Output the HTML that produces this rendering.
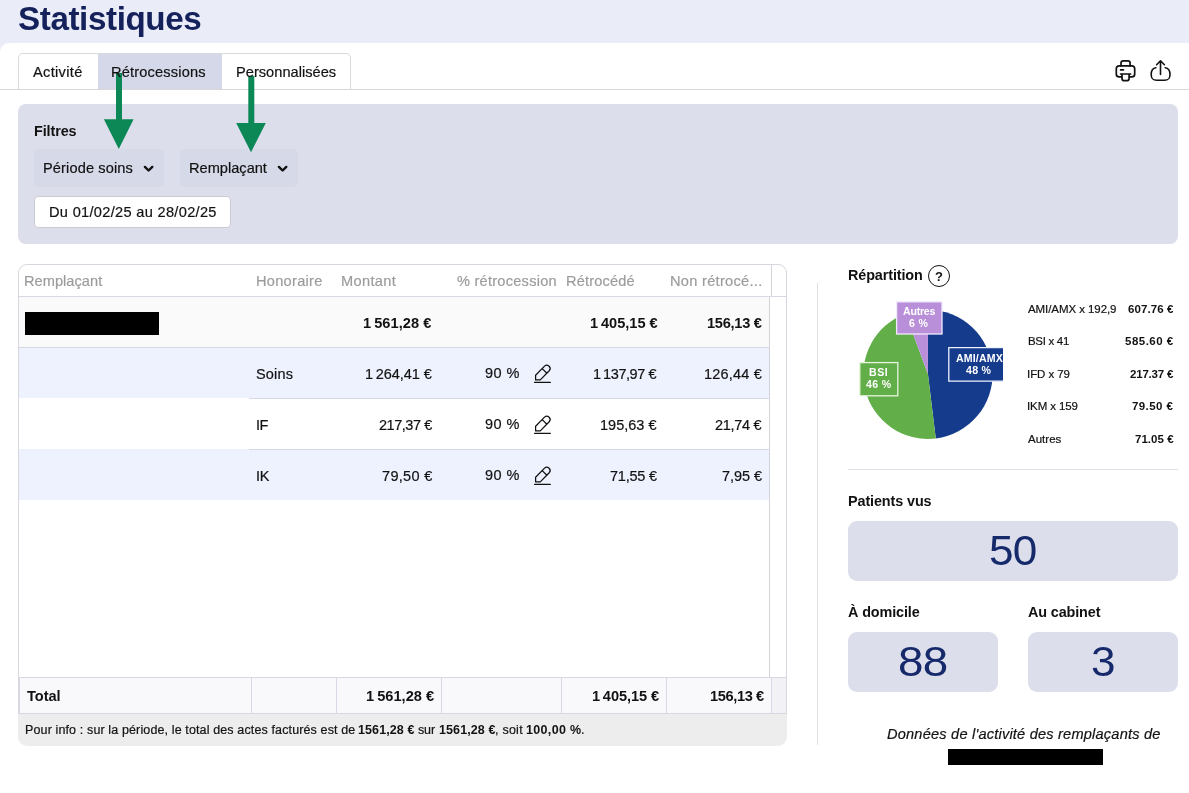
<!DOCTYPE html>
<html lang="fr"><head><meta charset="utf-8"><title>Statistiques</title>
<style>
*{box-sizing:border-box;margin:0;padding:0}
html,body{width:1189px;height:793px;overflow:hidden;background:#fff;font-family:"Liberation Sans",sans-serif;color:#121212}
.a{position:absolute}
.t{position:absolute;white-space:nowrap;line-height:1;color:#121212;will-change:transform}
.s{-webkit-text-stroke:0.2px currentColor}
.hl{position:absolute;height:1px;background:#d6d8e4}
.vl{position:absolute;width:1px;background:#d6d8e4}
svg{position:absolute;overflow:visible}
</style></head><body>
<!-- header -->
<div class="a" style="left:0;top:0;width:1189px;height:60px;background:#eaecf8"></div>
<div class="a" style="left:0;top:43px;width:1189px;height:750px;background:#fff;border-top-left-radius:9px"></div>
<!-- tabs -->
<div class="a" style="left:18px;top:53px;width:333px;height:37px;border:1px solid #d9dade;border-bottom:none;border-radius:5px 5px 0 0;background:#fff"></div>
<div class="a" style="left:98px;top:54px;width:124px;height:35px;background:#d5d8e8"></div>
<div class="hl" style="left:0;top:89px;width:1189px;background:#d8d8dc"></div>
<!-- filters -->
<div class="a" style="left:18px;top:104px;width:1160px;height:140px;background:#dcdeeb;border-radius:8px"></div>
<div class="a" style="left:34px;top:149px;width:130px;height:38px;background:#d6d9e8;border-radius:5px"></div>
<div class="a" style="left:180px;top:149px;width:118px;height:38px;background:#d6d9e8;border-radius:5px"></div>
<div class="a" style="left:34px;top:196px;width:197px;height:32px;background:#fff;border:1px solid #cacbd2;border-radius:4px"></div>
<svg style="left:0;top:0" width="1189" height="793" viewBox="0 0 1189 793">
 <g fill="none" stroke="#111" stroke-width="2.4" stroke-linecap="round" stroke-linejoin="round">
  <path d="M144.9 166.9 L148.6 170.5 L152.3 166.9"/>
  <path d="M278.9 166.9 L282.6 170.5 L286.3 166.9"/>
 </g>
 <g fill="#0c8856">
  <path d="M116 73 H122 V119.3 H133.6 L118.8 149 L103.9 119.3 H116 Z"/>
  <path d="M248.3 75.8 H254.3 V123 H265.8 L251 152.2 L236.2 123 H248.3 Z"/>
 </g>
 <!-- printer -->
 <g fill="none" stroke="#111" stroke-width="1.7" stroke-linecap="round" stroke-linejoin="round">
  <path d="M1121 65.8 V63.2 Q1121 60.9 1123.3 60.9 H1127.8 Q1130.1 60.9 1130.1 63.2 V65.8"/>
  <path d="M1121.6 76.9 H1119.3 Q1116.3 76.9 1116.3 73.9 V68.8 Q1116.3 65.8 1119.3 65.8 H1131.7 Q1134.7 65.8 1134.7 68.8 V73.9 Q1134.7 76.9 1131.7 76.9 H1129.6"/>
  <path d="M1120.6 74 H1130.6 M1122 74 V78.4 Q1122 80.7 1124.3 80.7 H1126.8 Q1129.1 80.7 1129.1 78.4 V74"/>
  <path d="M1120.6 69.9 H1123.4"/>
 </g>
 <!-- share -->
 <g fill="none" stroke="#111" stroke-width="1.6" stroke-linecap="round" stroke-linejoin="round">
  <path d="M1160.5 74.4 V61 M1156.6 64.7 L1160.5 60.8 L1164.4 64.7"/>
  <path d="M1155.9 67.7 C1152.3 68.2 1151.2 70.6 1151.2 74.5 C1151.2 78.8 1152.6 80.2 1156.8 80.2 H1164.4 C1168.6 80.2 1170 78.8 1170 74.5 C1170 70.6 1168.9 68.2 1165.2 67.7"/>
 </g>
</svg>
<!-- table -->
<div class="a" style="left:18px;top:714px;width:769px;height:32px;background:#ededed;border-radius:0 0 9px 9px"></div>
<div class="a" style="left:18px;top:264px;width:769px;height:450px;border:1px solid #d7d8df;border-radius:9px 9px 0 0;background:#fff;overflow:hidden">
 <div class="a" style="left:0;top:32px;width:751px;height:51px;background:#fafafa"></div>
 <div class="a" style="left:0;top:83px;width:751px;height:50px;background:#eef2fe"></div>
 <div class="a" style="left:0;top:184px;width:751px;height:51px;background:#eef2fe"></div>
 <div class="a" style="left:0;top:413px;width:767px;height:36px;background:#f9f9fb"></div>
 <div class="a" style="left:753px;top:413px;width:14px;height:36px;background:#f2f2f6"></div>
</div>
<div class="hl" style="left:19px;top:296px;width:767px"></div>
<div class="vl" style="left:771px;top:265px;height:31px;background:#d3d4da"></div>
<div class="vl" style="left:769px;top:297px;height:380px;background:#d3d4da"></div>
<div class="hl" style="left:19px;top:347px;width:751px"></div>
<div class="hl" style="left:249px;top:398px;width:521px"></div>
<div class="hl" style="left:249px;top:449px;width:521px"></div>
<div class="a" style="left:25px;top:312px;width:134px;height:23px;background:#000"></div>
<div class="hl" style="left:19px;top:677px;width:767px"></div>
<div class="hl" style="left:19px;top:713px;width:767px"></div>
<div class="vl" style="left:19px;top:677px;height:36px"></div>
<div class="vl" style="left:251px;top:678px;height:35px"></div>
<div class="vl" style="left:336px;top:678px;height:35px"></div>
<div class="vl" style="left:441px;top:678px;height:35px"></div>
<div class="vl" style="left:561px;top:678px;height:35px"></div>
<div class="vl" style="left:666px;top:678px;height:35px"></div>
<div class="vl" style="left:771px;top:678px;height:35px"></div>
<svg style="left:0;top:0" width="1189" height="793" viewBox="0 0 1189 793">
 <g fill="none" stroke="#111" stroke-width="1.25" stroke-linecap="round" stroke-linejoin="round">
  <path transform="translate(533 364)" d="M2.6 15.9 V11.2 L11.54 2.1 A3.3 3.3 0 0 1 16.2 6.76 L7.3 15.9 Z M9.2 4.6 L13.9 9.3 M1.6 18.4 H17.3"/>
  <path transform="translate(533 415)" d="M2.6 15.9 V11.2 L11.54 2.1 A3.3 3.3 0 0 1 16.2 6.76 L7.3 15.9 Z M9.2 4.6 L13.9 9.3 M1.6 18.4 H17.3"/>
  <path transform="translate(533 466)" d="M2.6 15.9 V11.2 L11.54 2.1 A3.3 3.3 0 0 1 16.2 6.76 L7.3 15.9 Z M9.2 4.6 L13.9 9.3 M1.6 18.4 H17.3"/>
 </g>
</svg>
<!-- right panel -->
<div class="vl" style="left:817px;top:283px;height:462px;background:#dfe0e5"></div>
<div class="a" style="left:927.5px;top:265px;width:22px;height:22px;border:1.9px solid #111;border-radius:50%"></div>
<svg style="left:0;top:0" width="1189" height="793" viewBox="0 0 1189 793">
 <path d="M927.95 374.3 L927.95 309.70 A64.6 64.6 0 0 1 935.78 438.42 Z" fill="#153b8c"/>
<path d="M927.95 374.3 L935.78 438.42 A64.6 64.6 0 0 1 905.61 313.68 Z" fill="#62ae48"/>
<path d="M927.95 374.3 L905.61 313.68 A64.6 64.6 0 0 1 927.95 309.70 Z" fill="#b88fd8"/>
<rect x="896.6" y="301.8" width="45.4" height="32.2" fill="#b88fd8" stroke="#f3eaff" stroke-width="1.3"/>
<rect x="859.8" y="362.6" width="38" height="33.2" fill="#62ae48" stroke="#e6f6df" stroke-width="1.3"/>
<path d="M1003 347.7 H948.8 V381.2 H1003" fill="#153b8c" stroke="#eef2ff" stroke-width="1.3"/>

</svg>
<div class="hl" style="left:848px;top:469px;width:330px;background:#dfe0e8"></div>
<div class="a" style="left:848px;top:521px;width:330px;height:60px;background:#dcdeeb;border-radius:9px"></div>
<div class="a" style="left:848px;top:632px;width:150px;height:60px;background:#dcdeeb;border-radius:9px"></div>
<div class="a" style="left:1028px;top:632px;width:150px;height:60px;background:#dcdeeb;border-radius:9px"></div>
<div class="a" style="left:947.6px;top:749px;width:155px;height:16.4px;background:#000"></div>
<div class="t" style="left:18.05px;top:2px;font-size:33.2px;font-weight:bold;letter-spacing:-0.399px;color:#14215a;">Statistiques</div>
<div class="t s" style="left:33.37px;top:65px;font-size:14.6px;letter-spacing:0.320px;">Activité</div>
<div class="t s" style="left:111.48px;top:65px;font-size:14.6px;letter-spacing:0.169px;">Rétrocessions</div>
<div class="t s" style="left:236.16px;top:65px;font-size:14.6px;letter-spacing:0.028px;">Personnalisées</div>
<div class="t" style="left:33.60px;top:124px;font-size:14.4px;font-weight:bold;letter-spacing:-0.107px;">Filtres</div>
<div class="t s" style="left:43.43px;top:161px;font-size:14.6px;letter-spacing:0.122px;">Période soins</div>
<div class="t s" style="left:189.20px;top:161px;font-size:14.6px;letter-spacing:0.006px;">Remplaçant</div>
<div class="t s" style="left:48.51px;top:205px;font-size:14.6px;letter-spacing:0.310px;">Du 01/02/25 au 28/02/25</div>
<div class="t s" style="left:23.87px;top:274px;font-size:14.6px;letter-spacing:0.040px;color:#9c9c9c;">Remplaçant</div>
<div class="t s" style="left:255.51px;top:274px;font-size:14.6px;letter-spacing:0.277px;color:#9c9c9c;">Honoraire</div>
<div class="t s" style="left:340.93px;top:274px;font-size:14.6px;letter-spacing:0.344px;color:#9c9c9c;">Montant</div>
<div class="t s" style="left:457.11px;top:274px;font-size:14.6px;letter-spacing:0.239px;color:#9c9c9c;">% rétrocession</div>
<div class="t s" style="left:565.51px;top:274px;font-size:14.6px;letter-spacing:0.165px;color:#9c9c9c;">Rétrocédé</div>
<div class="t s" style="left:670.48px;top:274px;font-size:14.6px;letter-spacing:0.295px;color:#9c9c9c;">Non rétrocé...</div>
<div class="t" style="left:363.40px;top:316px;font-size:14.6px;font-weight:bold;letter-spacing:0.068px;">1 561,28 €</div>
<div class="t" style="left:589.71px;top:316px;font-size:14.6px;font-weight:bold;letter-spacing:-0.022px;">1 405,15 €</div>
<div class="t" style="left:707.10px;top:316px;font-size:14.6px;font-weight:bold;letter-spacing:-0.264px;">156,13 €</div>
<div class="t s" style="left:255.85px;top:367px;font-size:14.5px;letter-spacing:0.178px;">Soins</div>
<div class="t s" style="left:365.00px;top:367px;font-size:14.5px;letter-spacing:-0.067px;">1 264,41 €</div>
<div class="t s" style="left:485.24px;top:366px;font-size:14.5px;letter-spacing:0.436px;">90 %</div>
<div class="t s" style="left:593.33px;top:367px;font-size:14.5px;letter-spacing:-0.429px;">1 137,97 €</div>
<div class="t s" style="left:704.00px;top:367px;font-size:14.5px;letter-spacing:0.182px;">126,44 €</div>
<div class="t s" style="left:255.69px;top:418px;font-size:14.5px;letter-spacing:-0.625px;">IF</div>
<div class="t s" style="left:378.61px;top:418px;font-size:14.5px;letter-spacing:-0.464px;">217,37 €</div>
<div class="t s" style="left:485.24px;top:417px;font-size:14.5px;letter-spacing:0.436px;">90 %</div>
<div class="t s" style="left:600.33px;top:418px;font-size:14.5px;letter-spacing:0.015px;">195,63 €</div>
<div class="t s" style="left:715.16px;top:418px;font-size:14.5px;letter-spacing:-0.304px;">21,74 €</div>
<div class="t s" style="left:255.69px;top:469px;font-size:14.5px;letter-spacing:-0.311px;">IK</div>
<div class="t s" style="left:381.55px;top:469px;font-size:14.5px;letter-spacing:0.313px;">79,50 €</div>
<div class="t s" style="left:485.24px;top:468px;font-size:14.5px;letter-spacing:0.436px;">90 %</div>
<div class="t s" style="left:609.82px;top:469px;font-size:14.5px;letter-spacing:-0.220px;">71,55 €</div>
<div class="t s" style="left:721.61px;top:469px;font-size:14.5px;letter-spacing:-0.043px;">7,95 €</div>
<div class="t" style="left:27.38px;top:689px;font-size:14.6px;font-weight:bold;letter-spacing:-0.050px;">Total</div>
<div class="t" style="left:365.71px;top:689px;font-size:14.6px;font-weight:bold;letter-spacing:0.044px;">1 561,28 €</div>
<div class="t" style="left:591.89px;top:689px;font-size:14.6px;font-weight:bold;letter-spacing:-0.087px;">1 405,15 €</div>
<div class="t" style="left:709.53px;top:689px;font-size:14.6px;font-weight:bold;letter-spacing:-0.368px;">156,13 €</div>
<div class="t s" style="left:24.81px;top:724px;font-size:12.5px;letter-spacing:0.129px;">Pour info : sur la période, le total des actes facturés est de</div>
<div class="t" style="left:358.48px;top:724px;font-size:12.5px;font-weight:bold;letter-spacing:0.093px;">1561,28 €</div>
<div class="t s" style="left:418.22px;top:724px;font-size:12.5px;letter-spacing:-0.141px;">sur</div>
<div class="t" style="left:439.10px;top:724px;font-size:12.5px;font-weight:bold;letter-spacing:0.090px;">1561,28 €</div>
<div class="t s" style="left:494.71px;top:724px;font-size:12.5px;letter-spacing:0.241px;">, soit</div>
<div class="t" style="left:525.96px;top:724px;font-size:12.5px;font-weight:bold;letter-spacing:0.330px;">100,00 %</div>
<div class="t s" style="left:581.18px;top:724px;font-size:12.5px;">.</div>
<div class="t" style="left:847.96px;top:268px;font-size:14.4px;font-weight:bold;letter-spacing:-0.112px;">Répartition</div>
<div class="t" style="left:934.57px;top:270px;font-size:13px;font-weight:bold;">?</div>
<div class="t s" style="left:1028.22px;top:304px;font-size:11.5px;letter-spacing:-0.071px;">AMI/AMX x 192,9</div>
<div class="t" style="left:1127.53px;top:304px;font-size:11.5px;font-weight:bold;letter-spacing:0.108px;">607.76 €</div>
<div class="t s" style="left:1027.58px;top:336px;font-size:11.5px;letter-spacing:-0.313px;">BSI x 41</div>
<div class="t" style="left:1124.87px;top:336px;font-size:11.5px;font-weight:bold;letter-spacing:0.487px;">585.60 €</div>
<div class="t s" style="left:1027.43px;top:369px;font-size:11.5px;letter-spacing:-0.070px;">IFD x 79</div>
<div class="t" style="left:1129.62px;top:369px;font-size:11.5px;font-weight:bold;letter-spacing:-0.190px;">217.37 €</div>
<div class="t s" style="left:1027.43px;top:401px;font-size:11.5px;letter-spacing:-0.100px;">IKM x 159</div>
<div class="t" style="left:1132.26px;top:401px;font-size:11.5px;font-weight:bold;letter-spacing:0.403px;">79.50 €</div>
<div class="t s" style="left:1028.22px;top:434px;font-size:11.5px;letter-spacing:0.016px;">Autres</div>
<div class="t" style="left:1134.50px;top:434px;font-size:11.5px;font-weight:bold;letter-spacing:0.030px;">71.05 €</div>
<div class="t" style="left:847.82px;top:494px;font-size:14.4px;font-weight:bold;letter-spacing:-0.109px;">Patients vus</div>
<div class="t" style="left:847.95px;top:605px;font-size:14.4px;font-weight:bold;letter-spacing:-0.118px;">À domicile</div>
<div class="t" style="left:1028.11px;top:605px;font-size:14.4px;font-weight:bold;letter-spacing:-0.127px;">Au cabinet</div>
<div class="t" style="left:989.12px;top:530px;font-size:42px;letter-spacing:-0.658px;transform-origin:0 50%;transform:scaleX(1.05);color:#16296b;">50</div>
<div class="t" style="left:898.10px;top:641px;font-size:42px;letter-spacing:-0.640px;transform-origin:0 50%;transform:scaleX(1.09);color:#16296b;">88</div>
<div class="t" style="left:1091.10px;top:641px;font-size:42px;transform-origin:0 50%;transform:scaleX(1.05);color:#16296b;">3</div>
<div class="t s" style="left:887.34px;top:727px;font-size:14.6px;font-style:italic;letter-spacing:0.199px;">Données de l'activité des remplaçants de</div>
<div class="t" style="left:902.95px;top:306px;font-size:10.6px;font-weight:bold;letter-spacing:-0.225px;color:#ffffff;">Autres</div>
<div class="t" style="left:909.38px;top:318px;font-size:10.6px;font-weight:bold;letter-spacing:0.330px;color:#ffffff;">6 %</div>
<div class="t" style="left:955.92px;top:353px;font-size:10.6px;font-weight:bold;letter-spacing:0.135px;color:#ffffff;">AMI/AMX</div>
<div class="t" style="left:966.46px;top:365px;font-size:10.6px;font-weight:bold;letter-spacing:0.284px;color:#ffffff;">48 %</div>
<div class="t" style="left:868.95px;top:367px;font-size:10.6px;font-weight:bold;letter-spacing:0.576px;color:#ffffff;">BSI</div>
<div class="t" style="left:865.84px;top:379px;font-size:10.6px;font-weight:bold;letter-spacing:0.321px;color:#ffffff;">46 %</div>
</body></html>
